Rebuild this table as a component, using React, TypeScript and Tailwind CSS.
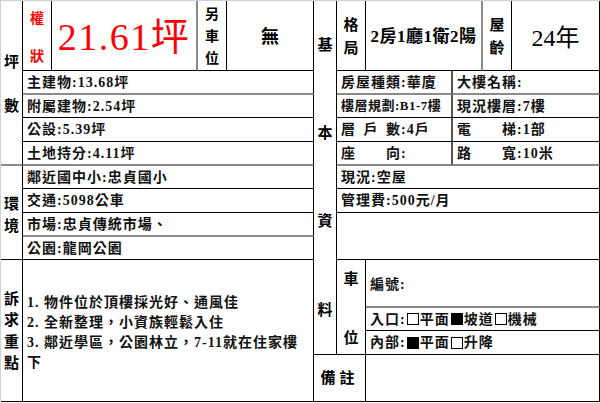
import type { ReactNode } from 'react';

function Cell({ className = '', children }: { className?: string; children?: ReactNode }) {
  return (
    <div className={`flex items-center border-r border-b border-black ${className}`}>
      {children}
    </div>
  );
}

function Spread({ text, className = 'w-[60px]' }: { text: string; className?: string }) {
  return (
    <span className={`inline-flex justify-between ${className}`}>
      {text.split('').map((ch, i) => (
        <span key={i}>{ch}</span>
      ))}
    </span>
  );
}

function Box({ checked = false }: { checked?: boolean }) {
  return (
    <span
      className={`mx-[1px] inline-block h-[12px] w-[12px] border border-black ${checked ? 'bg-black' : 'bg-white'}`}
    />
  );
}

const body = 'whitespace-nowrap pl-[4px] text-[14px] font-bold tracking-[1px] text-[#111]';
const gray = 'border-b-2 border-b-[#8a8a8a]';

export default function App() {
  return (
    <div className="h-[403px] w-[600px] bg-white font-['Liberation_Serif','Noto_Sans_CJK_TC',serif] text-black">
      <div className="grid w-fit grid-cols-[22px_29px_146px_29px_87px_23px_29px_87px_30px_29px_88px] grid-rows-[70px_24px_23px_24px_24px_23px_24px_24px_23px_48px_23px_24px_47px] border-t border-l border-[#c9d1de]">
        {/* 坪數 */}
        <Cell className={`col-start-1 row-span-5 row-start-1 flex-col justify-center gap-[22px] pt-[2px] text-[15px] leading-[22px] font-bold ${gray}`}>
          <span>坪</span>
          <span>數</span>
        </Cell>
        <Cell className="col-start-2 row-start-1 flex-col justify-between pt-[7px] pb-[3px] text-[14px] font-bold text-[#ff0000]">
          <span>權</span>
          <span>狀</span>
        </Cell>
        <Cell className="col-start-3 row-start-1 justify-center border-r-2 border-r-[#8a8a8a] pt-[4px] text-[38px] tracking-[1.5px] text-[#ff0000]">
          21.61坪
        </Cell>
        <Cell className="col-start-4 row-start-1 flex-col justify-center pt-[3px] text-[14px] leading-[22px] font-bold">
          <span>另</span>
          <span>車</span>
          <span>位</span>
        </Cell>
        <Cell className="col-start-5 row-start-1 justify-center pt-[4px] text-[18px] font-bold">無</Cell>

        <Cell className={`col-span-4 col-start-2 row-start-2 ${body} ${gray}`}>主建物:13.68坪</Cell>
        <Cell className={`col-span-4 col-start-2 row-start-3 ${body}`}>附屬建物:2.54坪</Cell>
        <Cell className={`col-span-4 col-start-2 row-start-4 ${body}`}>公設:5.39坪</Cell>
        <Cell className={`col-span-4 col-start-2 row-start-5 ${body} ${gray}`}>土地持分:4.11坪</Cell>

        {/* 環境 */}
        <Cell className="col-start-1 row-span-4 row-start-6 flex-col justify-center pt-[6px] text-[15px] leading-[21.5px] font-bold">
          <span>環</span>
          <span>境</span>
        </Cell>
        <Cell className={`col-span-4 col-start-2 row-start-6 ${body}`}>鄰近國中小:忠貞國小</Cell>
        <Cell className={`col-span-4 col-start-2 row-start-7 ${body}`}>交通:5098公車</Cell>
        <Cell className={`col-span-4 col-start-2 row-start-8 ${body} ${gray}`}>市場:忠貞傳統市場、</Cell>
        <Cell className={`col-span-4 col-start-2 row-start-9 ${body}`}>公園:龍岡公園</Cell>

        {/* 訴求重點 */}
        <Cell className="col-start-1 row-span-4 row-start-10 flex-col justify-center pt-[2px] text-[15px] leading-[21.5px] font-bold">
          <span>訴</span>
          <span>求</span>
          <span>重</span>
          <span>點</span>
        </Cell>
        <Cell className="col-span-4 col-start-2 row-span-4 row-start-10 pt-[4px] pl-[4px] text-[14px] leading-[20px] font-bold tracking-[1px] text-[#111]">
          <div>
            <div>1. 物件位於頂樓採光好、通風佳</div>
            <div>2. 全新整理，小資族輕鬆入住</div>
            <div>3. 鄰近學區，公園林立，7-11就在住家樓</div>
            <div>下</div>
          </div>
        </Cell>

        {/* 基本資料 */}
        <Cell className="col-start-6 row-span-12 row-start-1 flex-col justify-around text-[15px] font-bold">
          <span>基</span>
          <span>本</span>
          <span>資</span>
          <span>料</span>
        </Cell>
        <Cell className="col-start-7 row-start-1 flex-col justify-center pt-[2px] text-[15px] leading-[23px] font-bold">
          <span>格</span>
          <span>局</span>
        </Cell>
        <Cell className="col-span-2 col-start-8 row-start-1 justify-center border-r-2 border-r-[#8a8a8a] pt-[2px] text-[17px] font-bold tracking-[0.5px]">
          2房1廳1衛2陽
        </Cell>
        <Cell className="col-start-10 row-start-1 flex-col justify-center pt-[2px] text-[15px] leading-[23px] font-bold">
          <span>屋</span>
          <span>齡</span>
        </Cell>
        <Cell className="col-start-11 row-start-1 justify-center pt-[4px] text-[24px]">24年</Cell>

        <Cell className={`col-span-2 col-start-7 row-start-2 border-r-2 border-r-[#555] ${body} ${gray}`}>
          房屋種類:華廈
        </Cell>
        <Cell className={`col-span-3 col-start-9 row-start-2 ${body} ${gray}`}>大樓名稱:</Cell>
        <Cell className="col-span-2 col-start-7 row-start-3 border-r-2 border-r-[#555] pl-[4px] text-[13px] font-bold tracking-[0.5px] whitespace-nowrap text-[#111]">
          樓層規劃:B1-7樓
        </Cell>
        <Cell className={`col-span-3 col-start-9 row-start-3 ${body}`}>現況樓層:7樓</Cell>
        <Cell className={`col-span-2 col-start-7 row-start-4 border-r-2 border-r-[#555] ${body}`}>
          <Spread text="層戶數" />:4戶
        </Cell>
        <Cell className={`col-span-3 col-start-9 row-start-4 ${body}`}>
          <Spread text="電梯" />:1部
        </Cell>
        <Cell className={`col-span-2 col-start-7 row-start-5 border-r-2 border-r-[#555] ${body} ${gray}`}>
          <Spread text="座向" />:
        </Cell>
        <Cell className={`col-span-3 col-start-9 row-start-5 ${body} ${gray}`}>
          <Spread text="路寬" />:10米
        </Cell>

        <Cell className={`col-span-5 col-start-7 row-start-6 ${body}`}>現況:空屋</Cell>
        <Cell className={`col-span-5 col-start-7 row-start-7 ${body}`}>管理費:500元/月</Cell>
        <Cell className="col-span-5 col-start-7 row-span-2 row-start-8" />

        {/* 車位 */}
        <Cell className="col-start-7 row-span-3 row-start-10 flex-col justify-between pt-[8px] pb-[5px] text-[15px] font-bold">
          <span>車</span>
          <span>位</span>
        </Cell>
        <Cell className={`col-span-4 col-start-8 row-start-10 pt-[3px] ${body} ${gray}`}>編號:</Cell>
        <Cell className={`col-span-4 col-start-8 row-start-11 ${body}`}>
          入口:<Box />平面<Box checked />坡道<Box />機械
        </Cell>
        <Cell className={`col-span-4 col-start-8 row-start-12 ${body}`}>
          內部:<Box checked />平面<Box />升降
        </Cell>

        {/* 備註 */}
        <Cell className="col-span-2 col-start-6 row-start-13 justify-center text-[15px] font-bold tracking-[4px]">
          備註
        </Cell>
        <Cell className="col-span-4 col-start-8 row-start-13" />
      </div>
    </div>
  );
}
